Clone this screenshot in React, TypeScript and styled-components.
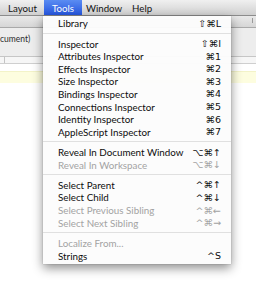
import styled, { createGlobalStyle } from "styled-components";

const GlobalStyle = createGlobalStyle`
  html, body {
    margin: 0;
    padding: 0;
    background: #ffffff;
    overflow: hidden;
  }
  body {
    font-family: Lato, "Open Sans", "DejaVu Sans", sans-serif;
    -webkit-font-smoothing: antialiased;
  }
`;

type MenuEntry =
  | { kind: "item"; label: string; keys: string; disabled?: boolean }
  | { kind: "sep" };

const entries: MenuEntry[] = [
  { kind: "item", label: "Library", keys: "⇧⌘L" },
  { kind: "sep" },
  { kind: "item", label: "Inspector", keys: "⇧⌘I" },
  { kind: "item", label: "Attributes Inspector", keys: "⌘1" },
  { kind: "item", label: "Effects Inspector", keys: "⌘2" },
  { kind: "item", label: "Size Inspector", keys: "⌘3" },
  { kind: "item", label: "Bindings Inspector", keys: "⌘4" },
  { kind: "item", label: "Connections Inspector", keys: "⌘5" },
  { kind: "item", label: "Identity Inspector", keys: "⌘6" },
  { kind: "item", label: "AppleScript Inspector", keys: "⌘7" },
  { kind: "sep" },
  { kind: "item", label: "Reveal In Document Window", keys: "⌥⌘↑" },
  { kind: "item", label: "Reveal In Workspace", keys: "⌥⌘↓", disabled: true },
  { kind: "sep" },
  { kind: "item", label: "Select Parent", keys: "^⌘↑" },
  { kind: "item", label: "Select Child", keys: "^⌘↓" },
  { kind: "item", label: "Select Previous Sibling", keys: "^⌘←", disabled: true },
  { kind: "item", label: "Select Next Sibling", keys: "^⌘→", disabled: true },
  { kind: "sep" },
  { kind: "item", label: "Localize From...", keys: "", disabled: true },
  { kind: "item", label: "Strings", keys: "^S" }
];

// menu bar titles, with their own left/right padding
const titles = [
  { label: "Layout", pad: "0 7px 0 8px" },
  { label: "Tools", pad: "0 8px", active: true },
  { label: "Window", pad: "0 5px 0 4px" },
  { label: "Help", pad: "0 5px" }
];

const Screen = styled.div`
  position: relative;
  width: 256px;
  height: 292px;
  overflow: hidden;
  background: #ffffff;
`;

const MenuBar = styled.div`
  display: flex;
  height: 15px;
  background: linear-gradient(#f0f0f0, #d0d0d0);
  border-bottom: 1px solid #8c8c8c;
`;

const MenuTitle = styled.div<{ $active?: boolean; $pad: string }>`
  display: flex;
  align-items: center;
  padding: ${(p) => p.$pad};
  font-size: 9.7px;
  color: ${(p) => (p.$active ? "#ffffff" : "#141414")};
  background: ${(p) => (p.$active ? "linear-gradient(#5a8cf2, #2656df)" : "transparent")};
`;

const Toolbar = styled.div`
  display: flex;
  justify-content: flex-end;
  height: 11px;
  padding-right: 3px;
  background: linear-gradient(#e9e9e9, #d6d6d6);
  border-bottom: 1px solid #a9a9a9;
`;

const ToolbarMark = styled.div`
  width: 1px;
  height: 5px;
  margin-top: 2px;
  background: #9a9a9a;
`;

const Header = styled.div`
  display: flex;
  height: 29px;
  padding-top: 6px;
  box-sizing: border-box;
  background: #ededed;
  border-bottom: 1px solid #c6c6c6;
`;

const HeaderTitle = styled.div`
  white-space: nowrap;
  font-size: 8.5px;
  line-height: 10px;
  color: #2c2c2c;
`;

const FieldRow = styled.div`
  display: flex;
  height: 6px;
  background: #f6f6f6;
  border-bottom: 1px solid #cfcfcf;
`;

const FieldCell = styled.div<{ $w: number }>`
  width: ${(p) => p.$w}px;
  border-right: 1px solid #c4c4c4;
`;

const Gap = styled.div<{ $h: number }>`
  height: ${(p) => p.$h}px;
  background: #ffffff;
`;

const Notice = styled.div`
  height: 11px;
  background: #fdfddf;
  border-top: 1px solid #f3f3c8;
`;

const Dropdown = styled.div`
  position: absolute;
  left: 43px;
  top: 16px;
  width: 188px;
  padding: 1px 0 2px;
  background: rgba(252, 252, 252, 0.97);
  box-shadow: 0 4px 10px rgba(0, 0, 0, 0.45), 0 0 1px rgba(0, 0, 0, 0.3);
`;

const Row = styled.div<{ $disabled?: boolean }>`
  display: flex;
  align-items: center;
  justify-content: space-between;
  height: 12.6px;
  padding: 0 10px 0 15px;
  font-size: 9.8px;
  color: ${(p) => (p.$disabled ? "#a3a3a3" : "#0d0d0d")};
  white-space: nowrap;
`;

const Keys = styled.span`
  font-family: "DejaVu Sans", sans-serif;
  font-size: 9.5px;
`;

const Separator = styled.div`
  height: 7.7px;
  display: flex;
  align-items: center;
  &::after {
    content: "";
    flex: 1;
    height: 1px;
    background: #e0e0e0;
  }
`;

export default function App() {
  return (
    <Screen>
      <GlobalStyle />
      <MenuBar>
        {titles.map((t) => (
          <MenuTitle key={t.label} $active={t.active} $pad={t.pad}>
            {t.label}
          </MenuTitle>
        ))}
      </MenuBar>
      <Toolbar>
        <ToolbarMark />
      </Toolbar>
      <Header>
        <HeaderTitle>cument)</HeaderTitle>
      </Header>
      <FieldRow>
        <FieldCell $w={4} />
      </FieldRow>
      <Gap $h={7} />
      <Notice />
      <Dropdown>
        {entries.map((e, i) =>
          e.kind === "sep" ? (
            <Separator key={i} />
          ) : (
            <Row key={i} $disabled={e.disabled}>
              <span>{e.label}</span>
              <Keys>{e.keys}</Keys>
            </Row>
          )
        )}
      </Dropdown>
    </Screen>
  );
}
